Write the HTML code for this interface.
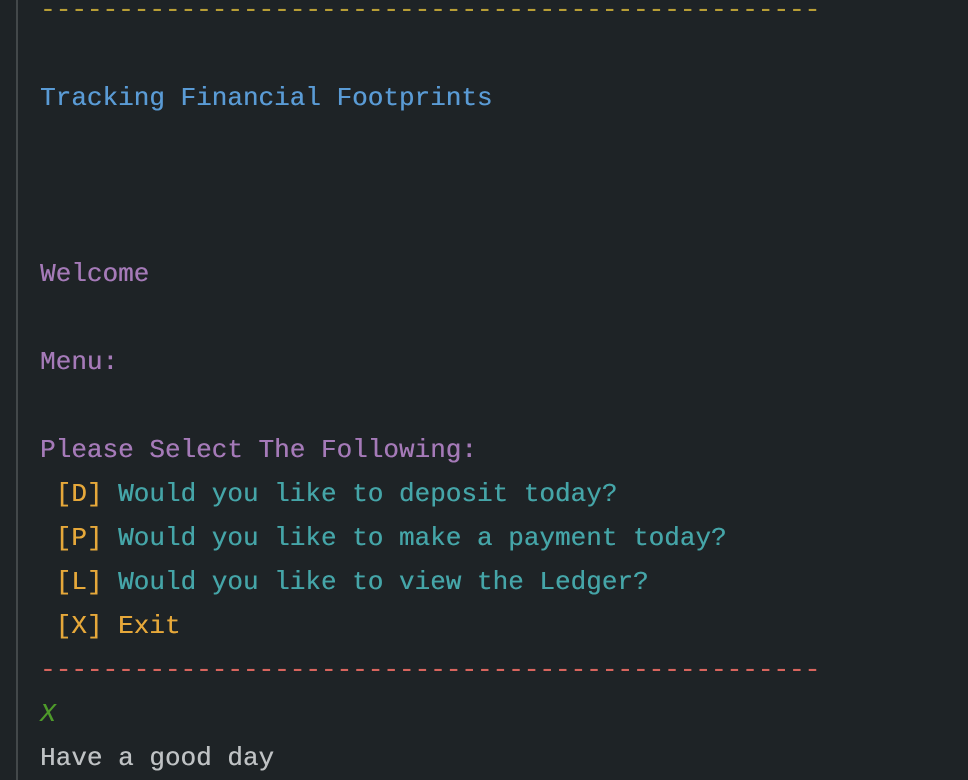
<!DOCTYPE html>
<html><head><meta charset="utf-8"><style>
html,body{margin:0;padding:0;background:#1e2326;width:968px;height:780px;overflow:hidden}
.bar{position:absolute;left:16px;top:0;width:2px;height:780px;background:#43484a}
pre{position:absolute;left:40px;top:-12px;margin:0;font-family:"Liberation Mono",monospace;font-size:26px;line-height:44px;color:#bfc2c4;white-space:pre;text-shadow:0.3px 0 0 currentColor}
.y{color:#b89e36}.b{color:#5a9bd5}.p{color:#a57ab8}.o{color:#e6a83a}.c{color:#45a5a8}.r{color:#d8655e}.g{color:#4e9a2a;font-style:italic}
</style></head><body><div class="bar"></div><pre><span class="y">--------------------------------------------------</span>

<span class="b">Tracking Financial Footprints</span>



<span class="p">Welcome</span>

<span class="p">Menu:</span>

<span class="p">Please Select The Following:</span>
 <span class="o">[D]</span> <span class="c">Would you like to deposit today?</span>
 <span class="o">[P]</span> <span class="c">Would you like to make a payment today?</span>
 <span class="o">[L]</span> <span class="c">Would you like to view the Ledger?</span>
 <span class="o">[X] Exit</span>
<span class="r">--------------------------------------------------</span>
<span class="g">X</span>
Have a good day</pre></body></html>
